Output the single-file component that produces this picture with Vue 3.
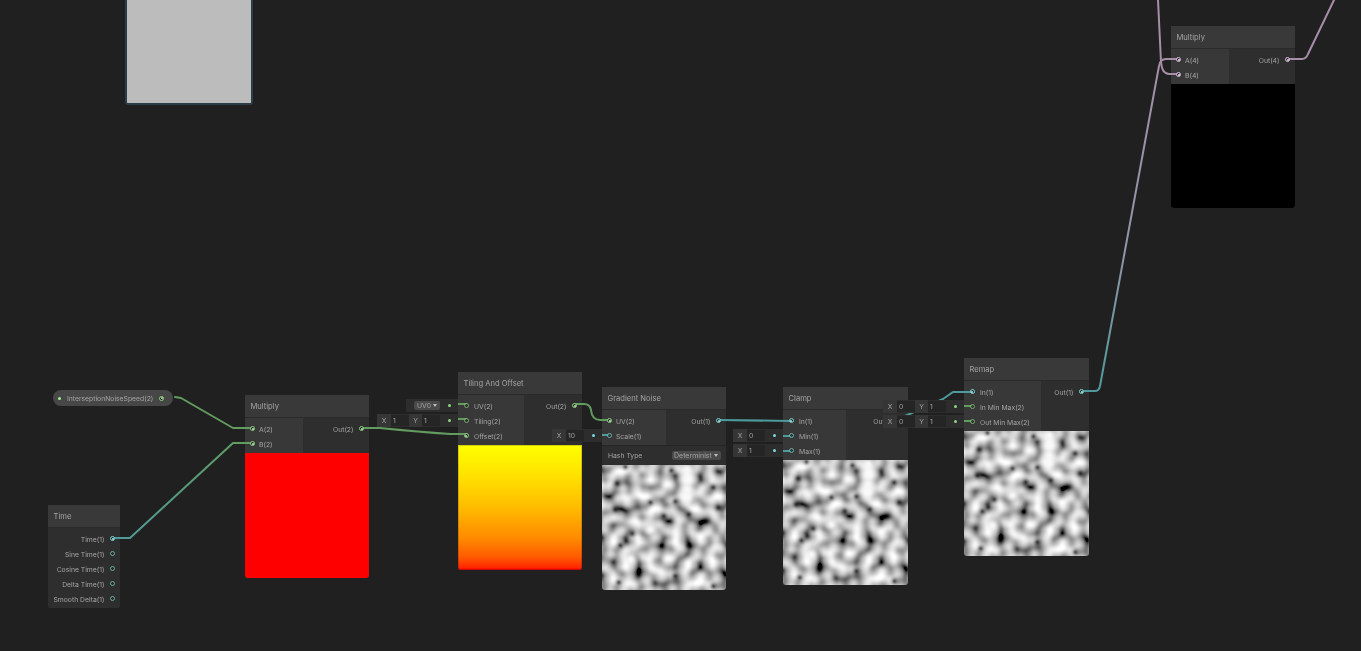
<script setup>
import { onMounted } from 'vue'

const nodes = [
  { id: 'mul1', title: 'Multiply', x: 245, y: 395, w: 124, inW: 58, fill: 'red',
    inputs: [{ t: 'A(2)', c: 'green', on: true }, { t: 'B(2)', c: 'green', on: true }],
    outputs: [{ t: 'Out(2)', c: 'green', on: true }] },
  { id: 'time', title: 'Time', x: 48, y: 505, w: 72, inW: 0, fill: '',
    inputs: [],
    outputs: [
      { t: 'Time(1)', c: 'teal', on: true }, { t: 'Sine Time(1)', c: 'teal' }, { t: 'Cosine Time(1)', c: 'teal' },
      { t: 'Delta Time(1)', c: 'teal' }, { t: 'Smooth Delta(1)', c: 'teal' }] },
  { id: 'tile', title: 'Tiling And Offset', x: 458, y: 372, w: 124, inW: 66, fill: 'ramp', loose: true,
    inputs: [
      { t: 'UV(2)', c: 'green', ctl: { drop: 'UV0' } },
      { t: 'Tiling(2)', c: 'green', ctl: { axes: [['X', '1'], ['Y', '1']] } },
      { t: 'Offset(2)', c: 'green', on: true }],
    outputs: [{ t: 'Out(2)', c: 'green', on: true }] },
  { id: 'noise', title: 'Gradient Noise', x: 602, y: 387, w: 124, inW: 64, fill: 'noise', hash: true,
    inputs: [
      { t: 'UV(2)', c: 'green', on: true },
      { t: 'Scale(1)', c: 'teal', ctl: { axes: [['X', '10']] } }],
    outputs: [{ t: 'Out(1)', c: 'teal', on: true }] },
  { id: 'clamp', title: 'Clamp', x: 783, y: 387, w: 125, inW: 63, fill: 'noise', loose: true,
    inputs: [
      { t: 'In(1)', c: 'teal', on: true },
      { t: 'Min(1)', c: 'teal', ctl: { axes: [['X', '0']] } },
      { t: 'Max(1)', c: 'teal', ctl: { axes: [['X', '1']] } }],
    outputs: [{ t: 'Out(1)', c: 'teal', on: true }] },
  { id: 'remap', title: 'Remap', x: 964, y: 358, w: 125, inW: 77, fill: 'noise', loose: true,
    inputs: [
      { t: 'In(1)', c: 'teal', on: true },
      { t: 'In Min Max(2)', c: 'green', ctl: { axes: [['X', '0'], ['Y', '1']] } },
      { t: 'Out Min Max(2)', c: 'green', ctl: { axes: [['X', '0'], ['Y', '1']] } }],
    outputs: [{ t: 'Out(1)', c: 'teal', on: true }] },
  { id: 'mul2', title: 'Multiply', x: 1171, y: 26, w: 124, inW: 58, fill: 'black',
    inputs: [{ t: 'A(4)', c: 'pink', on: true }, { t: 'B(4)', c: 'pink', on: true }],
    outputs: [{ t: 'Out(4)', c: 'pink', on: true }] }
]

const wires = [
  { d: 'M175 397 L181 398 L233 428 L252 428', s: '#629c5e' },
  { d: 'M113 538 L130 538 L233 443 L252 443', s: 'url(#tg)' },
  { d: 'M361 428 L380 428 Q420 432 450 434 L466 434', s: '#629c5e' },
  { d: 'M455 404 L466 404', s: '#629c5e' },
  { d: 'M455 419 L466 419', s: '#629c5e' },
  { d: 'M575 404 L584 404 Q590 404 591 410 Q592 420 600 420 L609 420', s: '#629c5e' },
  { d: 'M597 435 L609 435', s: '#4f9a9c' },
  { d: 'M719 420 L791 421', s: '#4f9a9c' },
  { d: 'M779 436 L791 436', s: '#4f9a9c' },
  { d: 'M779 451 L791 451', s: '#4f9a9c' },
  { d: 'M885 425 L943 399 L953 392 L972 392', s: '#4f9a9c' },
  { d: 'M960 406 L972 406', s: '#629c5e' },
  { d: 'M960 421 L972 421', s: '#629c5e' },
  { d: 'M1081 391 L1095 391 Q1099 391 1100 386 L1159 66 Q1160 59 1166 59 L1178 59', s: 'url(#rg)' },
  { d: 'M1158 0 L1161 62 Q1162 74 1169 74 L1178 74', s: '#a68da8' },
  { d: 'M1288 59 L1302 59 Q1306 59 1308 54 L1334 0', s: '#a68da8' }
]

const canvases = []
const setCanvas = el => { if (el && !canvases.includes(el)) canvases.push(el) }

function dir(px, py) {
  px = px % 289; py = py % 289
  let x = ((34 * px + 1) * px) % 289 + py
  x = ((34 * x + 1) * x) % 289
  const f = x / 41
  x = (f - Math.floor(f)) * 2 - 1
  const a = x - Math.floor(x + 0.5), b = Math.abs(x) - 0.5
  const l = Math.hypot(a, b) || 1
  return [a / l, b / l]
}
function gradientNoise(x, y) {
  const ix = Math.floor(x), iy = Math.floor(y), fx = x - ix, fy = y - iy
  const d = (a, b) => { const g = dir(ix + a, iy + b); return g[0] * (fx - a) + g[1] * (fy - b) }
  const s = t => t * t * t * (t * (t * 6 - 15) + 10)
  const u = s(fx), v = s(fy)
  const l = d(0, 0) + (d(0, 1) - d(0, 0)) * v
  const r = d(1, 0) + (d(1, 1) - d(1, 0)) * v
  return l + (r - l) * u + 0.5
}
const srgb = v => {
  v = Math.min(1, Math.max(0, v))
  return 255 * (v <= 0.0031308 ? 12.92 * v : 1.055 * Math.pow(v, 1 / 2.4) - 0.055)
}
const darkSpots = [[69, 5], [23, 1.3], [110.7, 22], [14.7, 18], [73, 36], [48, 37], [61.3, 50.7], [86.3, 49], [103, 55.7], [116, 42], [18, 80], [86, 80], [36.3, 109], [16.3, 117], [73, 110.7], [29.7, 68], [13, 44], [111, 120.7]]
const lightSpots = [[84.7, 4], [84.7, 14], [84.7, 24], [84.7, 32], [48, 64], [28, 94]]

function drawNoise(el) {
  const w = el.width, h = el.height
  const ctx = el.getContext('2d')
  const img = ctx.createImageData(w, h)
  for (let y = 0; y < h; y++) for (let x = 0; x < w; x++) {
    let v = gradientNoise(92.6 + x / 12.4, (124 - y) / 12.4)
    for (const p of lightSpots) {
      const d2 = (x - p[0]) ** 2 + (y - p[1]) ** 2
      v += (0.95 - v) * Math.exp(-d2 / 40)
    }
    for (const p of darkSpots) {
      const d2 = (x - p[0]) ** 2 + (y - p[1]) ** 2
      v *= 1 - 0.88 * Math.exp(-d2 / 11)
    }
    const g = srgb(v), i = (y * w + x) * 4
    img.data[i] = img.data[i + 1] = img.data[i + 2] = g
    img.data[i + 3] = 255
  }
  ctx.putImageData(img, 0, 0)
}
onMounted(() => canvases.forEach(drawNoise))
</script>

<template>
  <div class="graph">
    <div class="sample"></div>

    <div class="pill">
      <i class="pip"></i>
      <span class="pill-name soft">InterseptionNoiseSpeed(2)</span>
      <i class="dot green on"></i>
    </div>

    <section v-for="n in nodes" :key="n.id" class="node" :class="{ loose: n.loose }" :style="{ left: n.x + 'px', top: n.y + 'px', width: n.w + 'px' }">
      <header class="head"><span class="soft">{{ n.title }}</span></header>
      <div class="body">
        <div v-if="n.inputs.length" class="col in" :style="{ width: n.inW + 'px' }">
          <div v-for="p in n.inputs" :key="p.t" class="row">
            <div v-if="p.ctl" class="ctl" :class="{ wide: p.ctl.drop }">
              <template v-if="p.ctl.drop">
                <span class="drop"><span class="soft">{{ p.ctl.drop }}</span><b class="caret"></b></span>
              </template>
              <template v-else>
                <template v-for="a in p.ctl.axes" :key="a[0]">
                  <span class="axis"><span class="soft">{{ a[0] }}</span></span>
                  <span class="field"><span class="soft">{{ a[1] }}</span></span>
                </template>
              </template>
              <span class="tail"><i class="mini" :class="p.c"></i></span>
            </div>
            <i class="dot" :class="[p.c, { on: p.on }]"></i>
            <span class="label soft">{{ p.t }}</span>
          </div>
        </div>
        <div class="col out">
          <div v-for="p in n.outputs" :key="p.t" class="row end">
            <span class="label soft">{{ p.t }}</span>
            <i class="dot" :class="[p.c, { on: p.on }]"></i>
          </div>
        </div>
      </div>
      <div v-if="n.hash" class="hash">
        <span class="soft">Hash Type</span>
        <span class="drop hash-drop"><span class="clip soft">Deterministic</span><b class="caret"></b></span>
      </div>
      <div v-if="n.fill" class="preview" :class="n.fill">
        <canvas v-if="n.fill === 'noise'" :ref="setCanvas" :width="n.w" height="125" class="cv"></canvas>
      </div>
    </section>

    <svg class="wires" width="1361" height="651" viewBox="0 0 1361 651">
      <defs>
        <linearGradient id="tg" gradientUnits="userSpaceOnUse" x1="113" y1="538" x2="252" y2="443">
          <stop offset="0" stop-color="#4f9a9c" />
          <stop offset="1" stop-color="#629c5e" />
        </linearGradient>
        <linearGradient id="rg" gradientUnits="userSpaceOnUse" x1="1090" y1="391" x2="1178" y2="59">
          <stop offset="0" stop-color="#4f9a9c" />
          <stop offset="0.4" stop-color="#8d96a8" />
          <stop offset="1" stop-color="#a68da8" />
        </linearGradient>
      </defs>
      <path v-for="(w, i) in wires" :key="i" :d="w.d" :stroke="w.s" fill="none" stroke-width="2" stroke-linejoin="round" stroke-linecap="round" />
    </svg>
  </div>
</template>

<style scoped>
.graph {
  position: relative;
  width: 1361px;
  height: 651px;
  overflow: hidden;
  background: #202020;
  font-family: Inter, "Liberation Sans", sans-serif;
  font-size: 6.8px;
  color: #a4a4a4;
}
.soft { filter: blur(0.3px); display: inline-block; }
.sample {
  position: absolute;
  left: 125px;
  top: -20px;
  width: 124px;
  height: 123px;
  background: #bcbcbc;
  border: 2px solid #2b3d49;
  border-top: 0;
  border-radius: 0 0 3px 3px;
}
.pill {
  position: absolute;
  left: 53px;
  top: 390px;
  width: 120px;
  height: 16px;
  display: flex;
  align-items: center;
  border-radius: 8px;
  background: #474747;
  box-sizing: border-box;
  padding: 0 9px 0 5px;
}
.pip {
  width: 3px;
  height: 3px;
  border-radius: 50%;
  background: #a6ef92;
  flex: none;
}
.pill-name { margin-left: 6px; flex: 1; white-space: nowrap; }
.node {
  position: absolute;
  display: flex;
  flex-direction: column;
  background: #2e2e2e;
  border-radius: 2px;
}
.head {
  height: 22px;
  line-height: 23px;
  padding-left: 5.5px;
  background: #393939;
  border-bottom: 1px solid #2a2a2a;
  font-size: 7.6px;
  white-space: nowrap;
}
.body { display: flex; }
.col { padding: 3px 0 2px; box-sizing: border-box; }
.col.in { background: #383838; flex: none; }
.col.out { flex: 1; }
.row {
  position: relative;
  height: 15px;
  display: flex;
  align-items: center;
  white-space: nowrap;
}
.row.end { justify-content: flex-end; padding-right: 5px; }
.col.in .row { padding-left: 5px; }
.loose .col.in .row { padding-left: 5.5px; }
.label { padding-top: 1px; }
.col.in .label { margin: 0 0 0 4px; }
.loose .col.in .label { margin-left: 5.5px; }
.row.end .label { margin: 0 5.5px 0 0; }
.dot {
  position: relative;
  z-index: 3;
  flex: none;
  width: 5px;
  height: 5px;
  box-sizing: border-box;
  border-radius: 50%;
  border: 1px solid currentColor;
  background: #242824;
  filter: blur(0.25px);
}
.dot:not(.on) { opacity: 0.75; }
.dot.on::after {
  content: "";
  position: absolute;
  left: 0.5px;
  top: 0.5px;
  width: 2px;
  height: 2px;
  border-radius: 50%;
  background: color-mix(in srgb, currentColor 55%, white);
}
.green { color: #8fd682; }
.teal { color: #7cd8d8; }
.pink { color: #e3bfe6; }
.ctl {
  position: absolute;
  right: 100%;
  top: 1px;
  z-index: 3;
  height: 13px;
  display: flex;
  align-items: center;
  background: #2d2d2d;
  color: #a4a4a4;
}
.ctl.wide { padding-left: 8px; }
.axis {
  width: 14px;
  height: 13px;
  line-height: 13px;
  text-align: center;
  background: #363636;
  flex: none;
}
.field + .axis { width: 13px; }
.field {
  width: 16px;
  height: 11px;
  line-height: 11px;
  padding-left: 2px;
  background: #252525;
  flex: none;
}
.tail {
  width: 18px;
  height: 13px;
  display: flex;
  align-items: center;
  justify-content: center;
  flex: none;
}
.mini {
  width: 3px;
  height: 3px;
  border-radius: 50%;
  background: currentColor;
}
.drop {
  display: flex;
  align-items: center;
  justify-content: center;
  gap: 2px;
  width: 26px;
  height: 9px;
  background: #4a4a4a;
  border-radius: 2px;
}
.caret {
  flex: none;
  width: 0;
  height: 0;
  border-left: 2px solid transparent;
  border-right: 2px solid transparent;
  border-top: 3px solid #bdbdbd;
}
.hash {
  height: 20px;
  display: flex;
  align-items: center;
  justify-content: space-between;
  padding: 0 5px 0 6px;
  background: #2e2e2e;
  border-top: 1px solid #262626;
  box-sizing: border-box;
}
.hash-drop {
  width: 49px;
  height: 9px;
  justify-content: flex-start;
  padding-left: 2px;
  box-sizing: border-box;
}
.clip { width: 38px; overflow: hidden; white-space: nowrap; font-size: 7px; line-height: 9px; }
.preview {
  height: 125px;
  overflow: hidden;
  border-radius: 0 0 3px 3px;
}
.preview.red { background: #f00; }
.preview.black { background: #000; height: 124px; }
.preview.ramp {
  background: linear-gradient(to bottom, #ff0 0%, #ffe100 25%, #ffbc00 50%, #ff8900 75%, #ff5900 90%, #ff2700 98%, #f00 100%);
  box-shadow: inset 0 0 0 1px rgba(0, 0, 0, 0.18);
}
.cv { display: block; }
.wires { position: absolute; left: 0; top: 0; z-index: 2; pointer-events: none; }
</style>

<style>
body { margin: 0; background: #202020; }
</style>
